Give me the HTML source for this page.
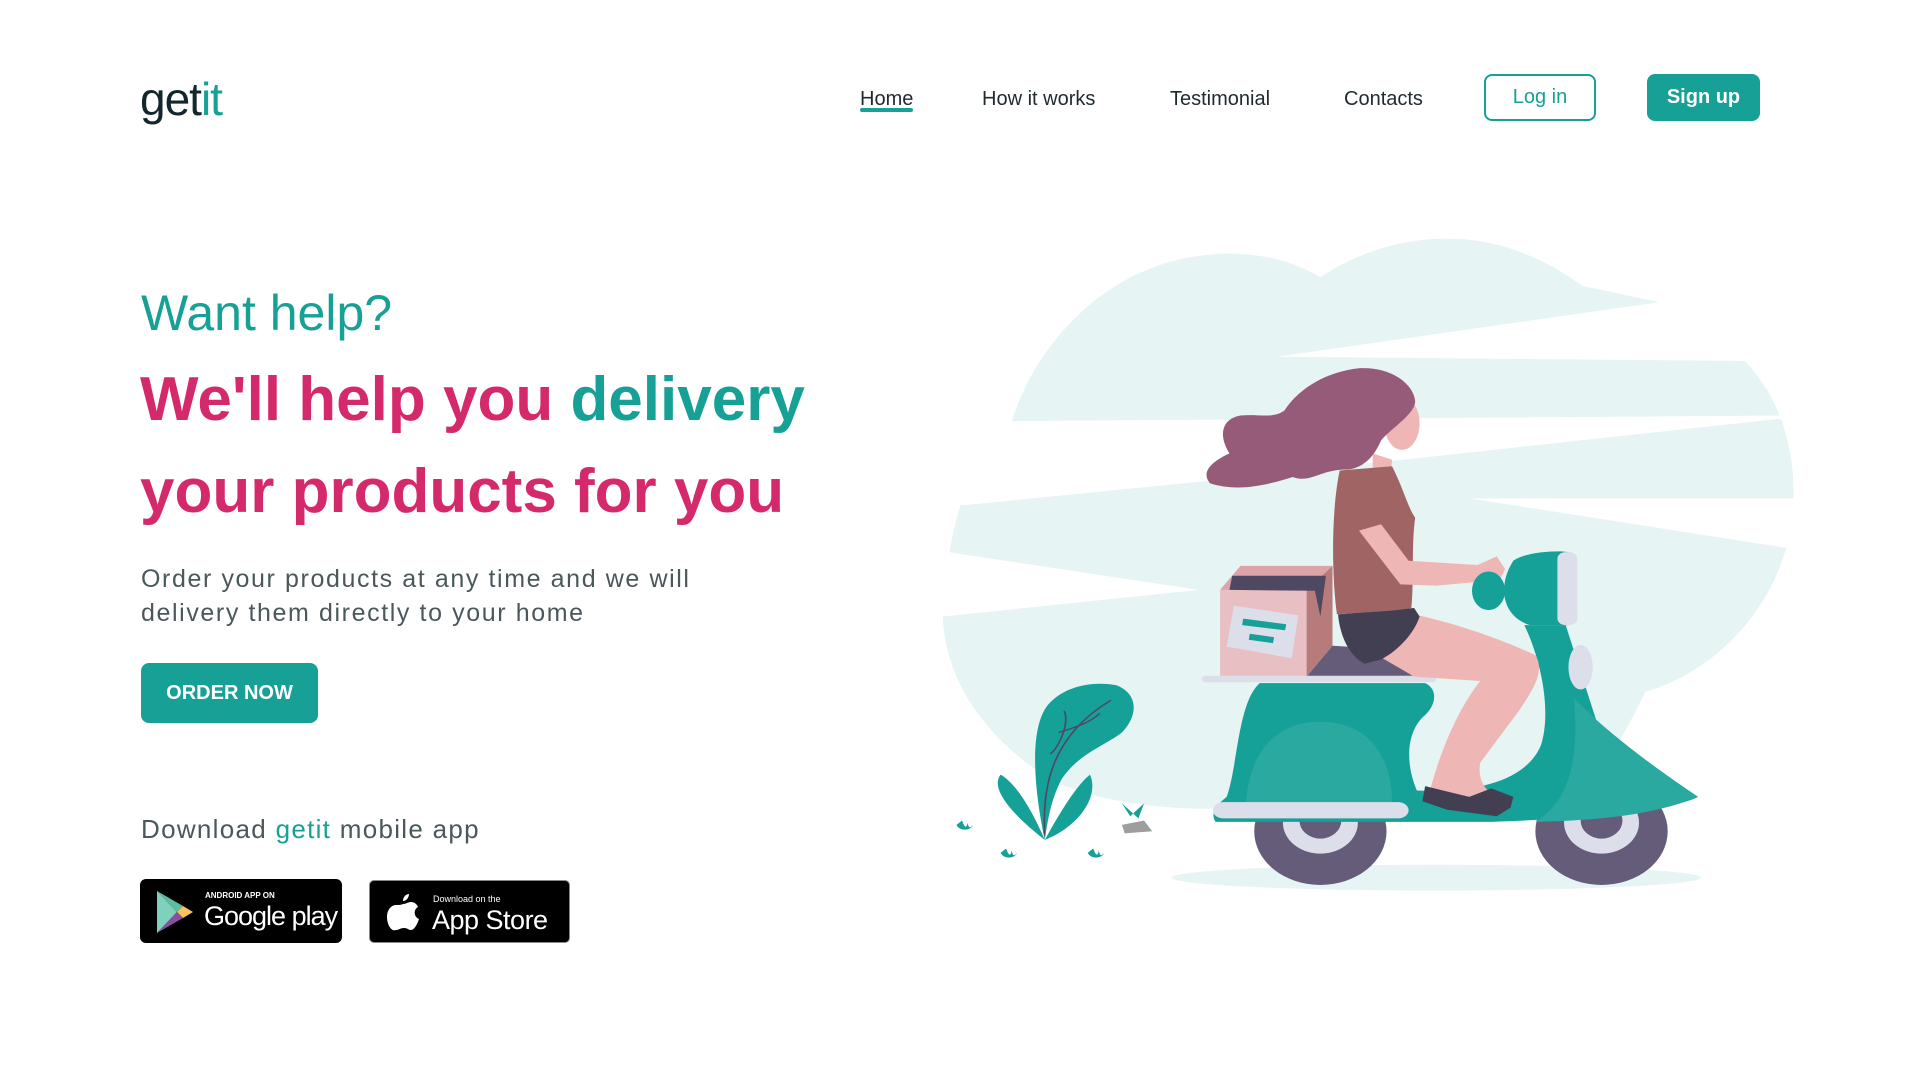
<!DOCTYPE html>
<html><head><meta charset="utf-8"><style>
*{margin:0;padding:0;box-sizing:border-box}
body{width:1920px;height:1080px;background:#fff;position:relative;overflow:hidden;font-family:"Liberation Sans",sans-serif;color:#1d2b33}
.a{position:absolute;white-space:nowrap}
.nav{font-size:20px;top:88px;color:#1f2a30}
.btn{position:absolute;border-radius:8px;display:flex;align-items:center;justify-content:center;font-size:20px}
</style></head><body>
<div class="a" style="left:140px;top:72px;font-size:46px;letter-spacing:-1px;color:#13262c">get<span style="color:#17a096">it</span></div>
<div class="a nav" style="left:860px">Home</div>
<div class="a" style="left:860px;top:108px;width:53px;height:4px;background:#17a096;border-radius:2px"></div>
<div class="a nav" style="left:982px">How it works</div>
<div class="a nav" style="left:1170px">Testimonial</div>
<div class="a nav" style="left:1344px">Contacts</div>
<div class="btn" style="left:1484px;top:74px;width:112px;height:47px;border:2px solid #17a096;color:#17a096">Log in</div>
<div class="btn" style="left:1647px;top:74px;width:113px;height:47px;background:#17a096;color:#fff;font-weight:bold">Sign up</div>

<div class="a" style="left:141px;top:284px;font-size:50px;color:#17a096">Want help?</div>
<div class="a" style="left:140px;top:364px;font-size:62px;font-weight:bold;color:#d42a6c">We'll help you <span style="color:#17a096">delivery</span></div>
<div class="a" style="left:140px;top:456px;font-size:62px;font-weight:bold;color:#d42a6c">your products for you</div>
<div class="a" style="left:141px;top:562px;font-size:25px;letter-spacing:1.6px;line-height:34px;color:#4a585c">Order your products at any time and we will<br>delivery them directly to your home</div>
<div class="btn" style="left:141px;top:663px;width:177px;height:60px;background:#17a096;color:#fff;font-weight:bold">ORDER NOW</div>
<div class="a" style="left:141px;top:814px;font-size:26px;letter-spacing:1.3px;color:#4a585c">Download <span style="color:#17a096">getit</span> mobile app</div>

<div class="a" style="left:140px;top:879px;width:202px;height:64px;background:#000;border-radius:6px">
<svg width="40" height="46" style="position:absolute;left:15px;top:10px" viewBox="0 0 40 46"><polygon points="2,2 22,23 2,44" fill="#7fd0bd"/><polygon points="2,2 28,17 22,23" fill="#5bbf9f"/><polygon points="22,23 28,17 38,23 28,29" fill="#f7c35f"/><polygon points="2,44 22,23 28,29" fill="#8c4fa0"/></svg>
<div class="a" style="left:65px;top:12px;font-size:8px;color:#fff;font-weight:bold">ANDROID APP ON</div>
<div class="a" style="left:64px;top:22px;font-size:27px;color:#fff;letter-spacing:-1px">Google play</div>
</div>
<div class="a" style="left:369px;top:880px;width:201px;height:63px;background:#000;border-radius:5px;border:1px solid #888">
<svg width="34" height="42" style="position:absolute;left:16px;top:11px" viewBox="0 0 34 42"><path d="M23 2c0 4-3 7-6 7 0-4 3-7 6-7zM17 12c3 0 5-2 8-2 3 0 6 2 7 5-5 3-4 10 1 12-2 6-5 11-8 11-3 0-3-2-7-2s-5 2-8 2C5 40 1 32 1 25c0-8 5-12 9-12 3 0 5 0 7-1z" fill="#fff"/></svg>
<div class="a" style="left:63px;top:13px;font-size:9px;color:#fff">Download on the</div>
<div class="a" style="left:62px;top:24px;font-size:27px;color:#fff;letter-spacing:-0.5px">App Store</div>
</div>

<svg class="a" style="left:940px;top:230px" width="860" height="670" viewBox="0 0 1560 1560" preserveAspectRatio="none">
<path d="M5 900 C10 700 60 500 130 445 C170 280 300 60 520 55 C600 55 650 80 690 110 C760 50 840 20 920 20 C1020 20 1100 70 1165 130 L1305 168 L1460 305 C1530 400 1550 520 1548 620 L1535 740 C1500 900 1400 1030 1280 1075 C1250 1150 1220 1230 1180 1280 L600 1340 C450 1360 300 1340 200 1280 C80 1180 10 1050 5 900Z" fill="#e6f4f3"/>
<polygon points="1305,168 1560,140 1560,305 1460,305 610,295" fill="#fff"/>
<polygon points="0,430 130,445 1520,432 1560,432 1560,440 1520,440 480,585 50,640 0,640" fill="#fff"/>
<polygon points="960,625 1560,625 1560,740 1535,740" fill="#fff"/>
<polygon points="0,750 15,750 470,838 5,900 0,900" fill="#fff"/>
<ellipse cx="900" cy="1508" rx="480" ry="30" fill="#e6f4f3"/>
<path d="M190 1420 C170 1300 160 1150 200 1100 C230 1060 280 1050 320 1060 C360 1080 360 1130 330 1170 C300 1200 250 1220 220 1280 C200 1330 195 1380 190 1420Z" fill="#15a098"/>
<path d="M190 1410 C185 1300 200 1180 310 1095 M200 1220 C220 1200 235 1140 225 1120 M215 1170 C240 1160 270 1150 290 1125" stroke="#4f4862" stroke-width="3" fill="none"/>
<path d="M190 1420 C130 1360 90 1300 110 1268 C140 1290 170 1360 190 1420Z" fill="#15a098"/>
<path d="M190 1420 C220 1350 250 1290 272 1268 C290 1320 250 1390 190 1420Z" fill="#15a098"/>
<g fill="#15a098"><path d="M30 1385c5 15 25 15 30 0-5 8-8 8-10-5-2 13-5 13-10-5z"/><path d="M110 1450c5 15 25 15 30 0-5 8-8 8-10-5-2 13-5 13-10-5z"/><path d="M268 1450c5 15 25 15 30 0-5 8-8 8-10-5-2 13-5 13-10-5z"/><path d="M330 1335l15 30 25-30-10 35z"/></g>
<path d="M330 1385 L370 1375 L385 1400 L335 1405Z" fill="#9e9e9e"/>
<ellipse cx="690" cy="1400" rx="120" ry="125" fill="#655c7a"/><ellipse cx="690" cy="1380" rx="68" ry="72" fill="#dcdfe9"/><ellipse cx="690" cy="1375" rx="38" ry="42" fill="#655c7a"/>
<ellipse cx="1200" cy="1400" rx="120" ry="125" fill="#655c7a"/><ellipse cx="1200" cy="1380" rx="68" ry="72" fill="#dcdfe9"/><ellipse cx="1200" cy="1375" rx="38" ry="42" fill="#655c7a"/>
<rect x="508" y="838" width="157" height="202" fill="#e8bfc3"/>
<polygon points="665,838 712,782 712,968 665,1040" fill="#b87b7b"/>
<polygon points="508,838 545,782 712,782 665,838" fill="#dca4a8"/>
<polygon points="530,805 700,805 690,900 680,840 525,838" fill="#4f4862"/>
<polygon points="533,875 650,897 638,997 520,970" fill="#dcdfe9"/>
<polygon points="550,905 628,918 626,932 548,920" fill="#15a098"/><polygon points="562,940 606,948 604,962 560,954" fill="#15a098"/>
<polygon points="665,1040 712,968 800,975 880,1040" fill="#655c7a"/>
<rect x="475" y="1038" width="425" height="15" rx="7" fill="#dcdfe9"/>
<path d="M580 1055 L880 1055 C905 1070 900 1110 875 1135 C845 1175 845 1245 865 1305 C960 1310 1060 1290 1090 1200 C1110 1120 1090 1000 1060 920 L1135 920 L1190 1140 C1260 1220 1330 1280 1375 1320 C1340 1345 1200 1370 1000 1378 L500 1378 C490 1360 500 1340 520 1320 C540 1250 540 1100 580 1055Z" fill="#15a098"/>
<path d="M555 1335 C560 1230 600 1145 690 1145 C780 1145 820 1230 820 1335Z" fill="#2aa9a0"/>
<path d="M1080 1378 C1140 1330 1160 1240 1150 1090 L1190 1140 C1260 1220 1330 1280 1375 1320 C1300 1360 1200 1375 1080 1378Z" fill="#2aa9a0"/>
<rect x="495" y="1332" width="355" height="38" rx="19" fill="#dcdfe9"/>
<path d="M1040 770 C1060 750 1120 745 1140 750 L1140 920 L1070 920 C1020 900 1010 830 1040 770Z" fill="#15a098"/>
<rect x="1120" y="750" width="36" height="170" rx="15" fill="#dcdfe9"/>
<ellipse cx="1162" cy="1018" rx="22" ry="52" fill="#dcdfe9"/>
<path d="M800 995 L860 895 C950 920 1030 960 1080 990 C1100 1030 1070 1080 1050 1120 L980 1240 C975 1270 985 1300 1000 1310 L960 1320 L890 1300 C900 1250 930 1130 980 1050 L860 1040Z" fill="#efb6b6"/>
<path d="M880 1295 L960 1320 L1000 1300 L1040 1320 L1035 1345 L1010 1365 L920 1350 L875 1330Z" fill="#433f52"/>
<path d="M722 895 L860 880 L870 900 C860 940 830 980 800 1000 L770 1010 C740 990 725 940 722 895Z" fill="#433f52"/>
<path d="M785 520 L820 535 L818 560 L785 555Z" fill="#efb6b6"/>
<path d="M725 560 L820 550 C840 600 850 650 862 670 C855 730 860 820 855 880 C810 890 760 890 720 895 C710 800 710 650 725 560Z" fill="#a16464"/>
<path d="M760 700 L800 685 L850 770 L975 780 L1010 760 L1025 790 L1015 815 L900 828 L835 825Z" fill="#efb6b6"/>
<ellipse cx="995" cy="840" rx="30" ry="45" fill="#15a098"/>
<ellipse cx="838" cy="450" rx="32" ry="62" fill="#efb6b6"/>
<path d="M490 590 C470 560 500 535 525 520 C505 480 510 440 545 432 C580 428 605 440 625 420 C650 370 700 330 760 322 C820 318 860 360 862 400 C860 430 820 460 800 490 C790 520 770 560 730 558 C690 560 670 590 640 575 C590 595 540 610 490 590Z" fill="#955b78"/>
</svg>
</body></html>
